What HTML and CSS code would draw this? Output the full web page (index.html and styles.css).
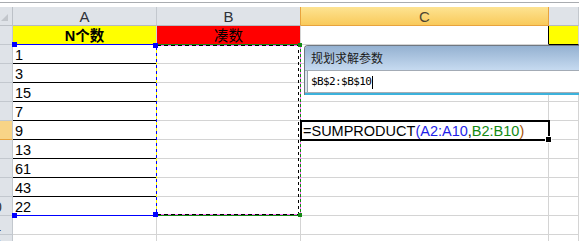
FILE: index.html
```html
<!DOCTYPE html>
<html lang="zh">
<head>
<meta charset="UTF-8">
<title>规划求解</title>
<link rel="stylesheet" href="styles.css">
</head>
<body>

<div class="topbar"></div>

<div class="sheet">
    <div class="corner"></div>
    <div class="colhdr">A</div>
    <div class="colhdr to-sel">B</div>
    <div class="colhdr sel">C</div>
    <div class="colhdr"></div>

    <div class="rowhdr"><span>1</span></div>
    <div class="cell yellow bold center">N个数</div>
    <div class="cell red center">凑数</div>
    <div class="cell edge-r"></div>
    <div class="cell yellow edge-b"></div>

    <div class="rowhdr"><span>2</span></div>
    <div class="cell line-b">1</div><div class="cell"></div><div class="cell"></div><div class="cell"></div>

    <div class="rowhdr"><span>3</span></div>
    <div class="cell line-b">3</div><div class="cell"></div><div class="cell"></div><div class="cell"></div>

    <div class="rowhdr"><span>4</span></div>
    <div class="cell line-b">15</div><div class="cell"></div><div class="cell"></div><div class="cell"></div>

    <div class="rowhdr"><span>5</span></div>
    <div class="cell line-b">7</div><div class="cell"></div><div class="cell"></div><div class="cell"></div>

    <div class="rowhdr sel"><span>6</span></div>
    <div class="cell line-b">9</div>
    <div class="cell"></div>
    <div class="cell active">=SUMPRODUCT<span class="ref-a">(A2:A10</span>,<span class="ref-b">B2:B10</span><span class="paren">)</span></div>
    <div class="cell"></div>

    <div class="rowhdr"><span>7</span></div>
    <div class="cell line-b">13</div><div class="cell"></div><div class="cell"></div><div class="cell"></div>

    <div class="rowhdr"><span>8</span></div>
    <div class="cell line-b">61</div><div class="cell"></div><div class="cell"></div><div class="cell"></div>

    <div class="rowhdr"><span>9</span></div>
    <div class="cell line-b">43</div><div class="cell"></div><div class="cell"></div><div class="cell"></div>

    <div class="rowhdr"><span>10</span></div>
    <div class="cell">22</div><div class="cell"></div><div class="cell"></div><div class="cell"></div>

    <div class="rowhdr"><span>11</span></div>
    <div class="cell"></div><div class="cell"></div><div class="cell"></div><div class="cell"></div>

    <div class="rowhdr"><span>12</span></div>
    <div class="cell"></div><div class="cell"></div><div class="cell"></div><div class="cell"></div>

    <!-- range highlights drawn over the grid -->
    <div class="range-a"></div>
    <div class="range-b"></div>
    <div class="handle blue" style="left:12px; top:35px"></div>
    <div class="handle blue" style="left:153px; top:36px"></div>
    <div class="handle blue" style="left:12px; top:206px"></div>
    <div class="handle blue" style="left:153px; top:205px"></div>
    <div class="handle green" style="left:298px; top:36px"></div>
    <div class="handle green" style="left:298px; top:206px"></div>
</div>

<div class="dialog">
    <div class="dlg-title">规划求解参数</div>
    <div class="dlg-body">
        <div class="dlg-input">$B$2:$B$10<span class="caret"></span></div>
    </div>
    <div class="dlg-foot"></div>
</div>

</body>
</html>
```

FILE: styles.css
```css
body {
    margin: 0;
    width: 579px;
    height: 241px;
    overflow: hidden;
    background-color: #ffffff;
    font-family: "Liberation Sans", "Noto Sans CJK SC", sans-serif;
    position: relative;
}
.topbar {
    height: 7px;
    background: linear-gradient(#ffffff 0 2px, #a9acb0 2px 3px, #ffffff 3px);
}
.sheet {
    position: relative;
    display: grid;
    grid-template-columns: 13px 144px 144px 248px 1fr;
    grid-auto-rows: 19px;
}
.corner, .colhdr, .rowhdr, .cell {
    box-sizing: border-box;
    border-right: 1px solid #d4d4d4;
    border-bottom: 1px solid #d4d4d4;
}
.corner {
    position: relative;
    background-color: #dfe3e8;
    border-color: #bcc1c7;
}
.corner::after {
    content: "";
    position: absolute;
    right: 4px;
    bottom: 4px;
    border-left: 7px solid transparent;
    border-bottom: 7px solid #c2c6cb;
}
.colhdr {
    background-color: #dfe3e8;
    border-color: #c3c8ce;
    border-bottom-color: #b5bac0;
    color: #2e3238;
    font-size: 15px;
    line-height: 16px;
    display: flex;
    align-items: center;
    justify-content: center;
    padding-top: 1px;
}
.colhdr.to-sel {
    border-right-color: #e8a33d;
}
.colhdr.sel {
    background: linear-gradient(#fde392, #f9ca5b);
    border-right-color: #e8a33d;
    border-bottom-color: #e8a33d;
    color: #4d4530;
}
.rowhdr {
    background-color: #dfe3e8;
    border-color: #c3c8ce;
    overflow: hidden;
    font-size: 14px;
    line-height: 16px;
    color: #333333;
    display: flex;
    align-items: flex-end;
}
.rowhdr span {
    flex: none;
    width: 30px;
    margin-left: -21px;
    text-align: center;
}
.rowhdr.sel {
    background-color: #f8d487;
    border-bottom-color: #e8a33d;
}
.cell {
    display: flex;
    align-items: flex-end;
    padding-left: 2px;
    font-size: 14.5px;
    line-height: 16px;
    color: #000000;
    white-space: nowrap;
}
.center {
    justify-content: center;
    padding-left: 0;
}
.bold {
    font-weight: bold;
}
.yellow {
    background-color: #ffff00;
}
.red {
    background-color: #ff0000;
}
.line-b {
    border-bottom-color: #000000;
}
.edge-r {
    border-right-color: #000000;
}
.edge-b {
    border-bottom-color: #000000;
}
.active {
    position: relative;
    z-index: 3;
    overflow: visible;
}
.active::after {
    content: "";
    position: absolute;
    left: -1px;
    top: -1px;
    right: -2px;
    bottom: -2px;
    border: 2px solid #000000;
}
.active::before {
    content: "";
    position: absolute;
    left: 244px;
    top: 15px;
    width: 5px;
    height: 5px;
    background-color: #000000;
    border: 1px solid #ffffff;
    z-index: 1;
}
.ref-a {
    color: #1f1fe8;
}
.ref-b {
    color: #138a13;
}
.paren {
    color: #a8560a;
}
.range-a {
    position: absolute;
    left: 13px;
    top: 37px;
    width: 144px;
    height: 172px;
    background:
        linear-gradient(#0000ff, #0000ff) 0 0 / 100% 1px no-repeat,
        linear-gradient(#0000ff, #0000ff) 0 100% / 100% 1px no-repeat,
        repeating-linear-gradient(#ffff00 0 3px, #0000ff 3px 6px) 100% 0 / 1px 100% no-repeat;
    z-index: 2;
}
.range-b {
    position: absolute;
    left: 157px;
    top: 37px;
    width: 144px;
    height: 172px;
    background:
        linear-gradient(#138a13, #138a13) 0 0 / 100% 1px no-repeat,
        repeating-linear-gradient(90deg, #000000 0 4px, #ff66ff 4px 7px) 0 1px / 100% 1px no-repeat,
        linear-gradient(#138a13, #138a13) 0 100% / 100% 1px no-repeat,
        repeating-linear-gradient(90deg, #000000 0 4px, #ff66ff 4px 7px) 0 170px / 100% 1px no-repeat,
        repeating-linear-gradient(#000000 0 3px, transparent 3px 6px) 141px 0 / 1px 100% no-repeat,
        repeating-linear-gradient(#138a13 0 3px, #ff66ff 3px 5px) 100% 0 / 1px 100% no-repeat;
    z-index: 2;
}
.handle {
    position: absolute;
    width: 5px;
    height: 5px;
    z-index: 4;
}
.handle.blue {
    background-color: #0000ff;
}
.handle.green {
    width: 4px;
    height: 4px;
    background-color: #138a13;
}
.dialog {
    position: absolute;
    left: 304px;
    top: 45px;
    width: 290px;
    border: 1px solid #6f7780;
    border-right: none;
    border-bottom: none;
    border-top-left-radius: 4px;
    overflow: hidden;
    z-index: 10;
    background-color: #dde4ee;
}
.dlg-title {
    height: 24px;
    padding-left: 6px;
    background: linear-gradient(#94b1d1, #c6daf0);
    border-bottom: 1px solid #a3abb5;
    font-family: "Noto Sans CJK SC", sans-serif;
    font-size: 12px;
    line-height: 24px;
    color: #1b1b1b;
}
.dlg-body {
    padding-left: 2px;
}
.dlg-input {
    height: 21px;
    padding-left: 3px;
    background-color: #ffffff;
    border-left: 1px solid #9aa4ae;
    font-family: "DejaVu Sans Mono", monospace;
    font-size: 11px;
    letter-spacing: -0.6px;
    line-height: 21px;
    color: #000000;
}
.caret {
    display: inline-block;
    width: 1px;
    height: 13px;
    margin-left: 1px;
    background-color: #000000;
    vertical-align: middle;
}
.dlg-foot {
    height: 1px;
    background-color: #a7adb4;
    border-bottom: 2px solid #3cb2dc;
}
```
